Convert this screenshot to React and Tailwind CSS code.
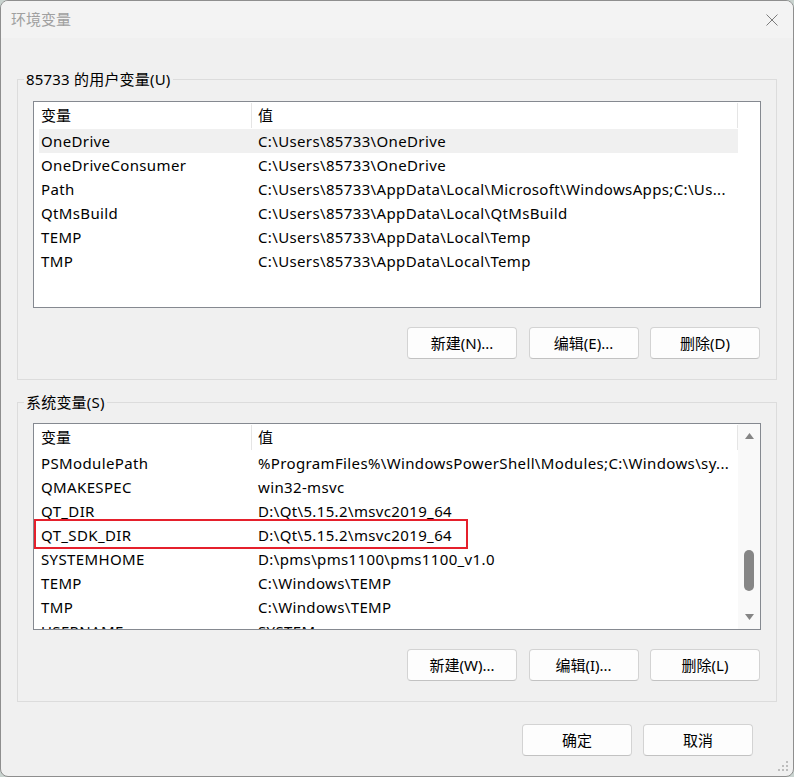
import React from "react";

const userVars = [
  ["OneDrive", "C:\\Users\\85733\\OneDrive"],
  ["OneDriveConsumer", "C:\\Users\\85733\\OneDrive"],
  ["Path", "C:\\Users\\85733\\AppData\\Local\\Microsoft\\WindowsApps;C:\\Us..."],
  ["QtMsBuild", "C:\\Users\\85733\\AppData\\Local\\QtMsBuild"],
  ["TEMP", "C:\\Users\\85733\\AppData\\Local\\Temp"],
  ["TMP", "C:\\Users\\85733\\AppData\\Local\\Temp"],
];

const sysVars = [
  ["PSModulePath", "%ProgramFiles%\\WindowsPowerShell\\Modules;C:\\Windows\\sy..."],
  ["QMAKESPEC", "win32-msvc"],
  ["QT_DIR", "D:\\Qt\\5.15.2\\msvc2019_64"],
  ["QT_SDK_DIR", "D:\\Qt\\5.15.2\\msvc2019_64"],
  ["SYSTEMHOME", "D:\\pms\\pms1100\\pms1100_v1.0"],
  ["TEMP", "C:\\Windows\\TEMP"],
  ["TMP", "C:\\Windows\\TEMP"],
  ["USERNAME", "SYSTEM"],
];

function Button({ children }) {
  return (
    <button className="w-[110px] h-[32px] rounded-[4px] border border-[#d3d3d3] border-b-[#c2c2c2] bg-[#fdfdfd] text-[15px] text-black leading-none">
      {children}
    </button>
  );
}

function Header() {
  return (
    <div className="flex h-[27px] shrink-0 items-center">
      <div className="w-[218px] h-[25px] flex items-center pl-[7px] border-r border-[#e5e5e5]">变量</div>
      <div className="w-[486px] h-[25px] flex items-center pl-[6px] border-r border-[#e5e5e5]">值</div>
    </div>
  );
}

function Row({ name, value, selected }) {
  return (
    <div
      className={`ml-[5px] w-[699px] h-[24px] shrink-0 flex items-center whitespace-nowrap tracking-[0.36px] ${
        selected ? "bg-[#f0f0f0]" : ""
      }`}
    >
      <div className="w-[213px] pl-[2px] overflow-hidden">{name}</div>
      <div className="flex-1 pl-[6px] overflow-hidden">{value}</div>
    </div>
  );
}

function Group({ label, children }) {
  return (
    <fieldset className="border border-[#dcdcdc] p-0 m-0">
      <legend className="ml-[6px] px-[2px] text-[15px] leading-[20px] tracking-[0.2px]">{label}</legend>
      {children}
    </fieldset>
  );
}

export default function App() {
  return (
    <div className="w-[794px] h-[777px] bg-[#c9d3cf] font-['Noto_Sans','Noto_Sans_CJK_SC',sans-serif] text-[15px] text-black">
      <div className="relative w-[794px] h-[777px] rounded-[8px] border border-[#8e8e8e] bg-[#f0f0f0] overflow-hidden flex flex-col">
        {/* title bar */}
        <div className="h-[37px] shrink-0 bg-[#f3f3f3] flex items-center justify-between pl-[10px] pr-[15px]">
          <span className="text-[#a0a0a0] text-[15px]">环境变量</span>
          <svg width="12" height="12" viewBox="0 0 12 12" className="mt-[1px]">
            <path d="M0.5 0.5 L11.5 11.5 M11.5 0.5 L0.5 11.5" stroke="#7c7c7c" strokeWidth="1" />
          </svg>
        </div>

        <div className="px-[16px]">
          {/* user variables */}
          <div className="mt-[31px]">
            <Group label="85733 的用户变量(U)">
              <div className="px-[15px] pt-[12px] pb-[20px]">
                <div className="h-[207px] border border-[#858990] bg-white flex flex-col overflow-hidden">
                  <Header />
                  {userVars.map(([n, v], i) => (
                    <Row key={n} name={n} value={v} selected={i === 0} />
                  ))}
                </div>
                <div className="mt-[19px] flex justify-end gap-[11.5px] pr-[1px]">
                  <Button>新建(N)...</Button>
                  <Button>编辑(E)...</Button>
                  <Button>删除(D)</Button>
                </div>
              </div>
            </Group>
          </div>

          {/* system variables */}
          <div className="mt-[12px]">
            <Group label="系统变量(S)">
              <div className="px-[15px] pt-[11px] pb-[20px]">
                <div className="relative h-[207px] border border-[#858990] bg-white flex overflow-hidden">
                  <div className="flex-1 flex flex-col overflow-hidden">
                    <Header />
                    {sysVars.map(([n, v]) => (
                      <Row key={n} name={n} value={v} />
                    ))}
                  </div>
                  <div className="w-[22px] shrink-0 bg-[#f9f9f9] flex flex-col items-center pt-[9px] pb-[9px]">
                    <svg width="9" height="6" viewBox="0 0 9 6">
                      <path d="M4.5 0 L9 6 L0 6 Z" fill="#858585" />
                    </svg>
                    <div className="mt-[111px] w-[10px] h-[41px] rounded-full bg-[#868686]" />
                    <div className="flex-1" />
                    <svg width="9" height="6" viewBox="0 0 9 6">
                      <path d="M0 0 L9 0 L4.5 6 Z" fill="#858585" />
                    </svg>
                  </div>
                  {/* highlight annotation */}
                  <div className="absolute left-0 top-[95px] w-[434px] h-[30px] border-2 border-[#e5202c]" />
                </div>
                <div className="mt-[19px] flex justify-end gap-[11.5px] pr-[1px]">
                  <Button>新建(W)...</Button>
                  <Button>编辑(I)...</Button>
                  <Button>删除(L)</Button>
                </div>
              </div>
            </Group>
          </div>

          <div className="mt-[22px] flex justify-end gap-[11px] pr-[24px]">
            <Button>确定</Button>
            <Button>取消</Button>
          </div>
        </div>

        {/* resize grip */}
        <svg width="12" height="12" viewBox="0 0 12 12" className="absolute right-[3px] bottom-[3px]">
          <rect x="8" y="0" width="2" height="2" fill="#bdbdbd" />
          <rect x="4" y="4" width="2" height="2" fill="#bdbdbd" />
          <rect x="8" y="4" width="2" height="2" fill="#bdbdbd" />
          <rect x="0" y="8" width="2" height="2" fill="#bdbdbd" />
          <rect x="4" y="8" width="2" height="2" fill="#bdbdbd" />
          <rect x="8" y="8" width="2" height="2" fill="#bdbdbd" />
        </svg>
      </div>
    </div>
  );
}
